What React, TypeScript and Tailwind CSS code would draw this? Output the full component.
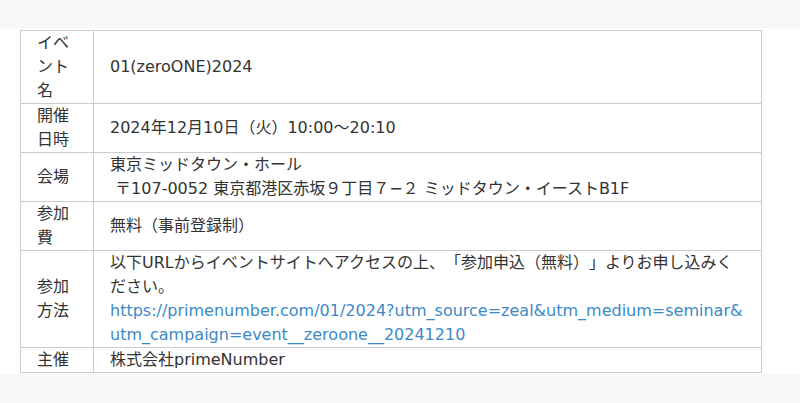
const rows: { label: string; body: React.ReactNode }[] = [
  { label: 'イベント名', body: '01(zeroONE)2024' },
  { label: '開催日時', body: '2024年12月10日（火）10:00〜20:10' },
  {
    label: '会場',
    body: (
      <>
        東京ミッドタウン・ホール
        <br />
        &nbsp;〒107-0052 東京都港区赤坂９丁目７−２ ミッドタウン・イーストB1F
      </>
    ),
  },
  { label: '参加費', body: '無料（事前登録制）' },
  {
    label: '参加方法',
    body: (
      <>
        以下URLからイベントサイトへアクセスの上、「参加申込（無料）」よりお申し込みください。
        <br />
        <a
          href="#"
          className="break-all text-[#3d89c6]"
        >
          https://primenumber.com/01/2024?utm_source=zeal&amp;utm_medium=seminar&amp;utm_campaign=event__zeroone__20241210
        </a>
      </>
    ),
  },
  { label: '主催', body: '株式会社primeNumber' },
]

export default function App() {
  return (
    <div
      className="min-h-[403px] bg-[#f8f8f8] pt-[28px] text-[16px] leading-[24px] text-[#333] [text-spacing-trim:space-all]"
      style={{ fontFamily: '"DejaVu Sans", "Noto Sans CJK JP", sans-serif' }}
    >
      <div className="bg-white pt-[2px] pb-px">
        <table className="ml-[20px] w-[742px] border-collapse border border-[#ccc]">
          <tbody>
            {rows.map(r => (
              <tr key={r.label}>
                <th className="w-[73px] border border-[#ccc] px-4 py-0 text-left align-middle font-normal">
                  {r.label}
                </th>
                <td className="border border-[#ccc] px-4 py-0 align-middle">{r.body}</td>
              </tr>
            ))}
          </tbody>
        </table>
      </div>
    </div>
  )
}
